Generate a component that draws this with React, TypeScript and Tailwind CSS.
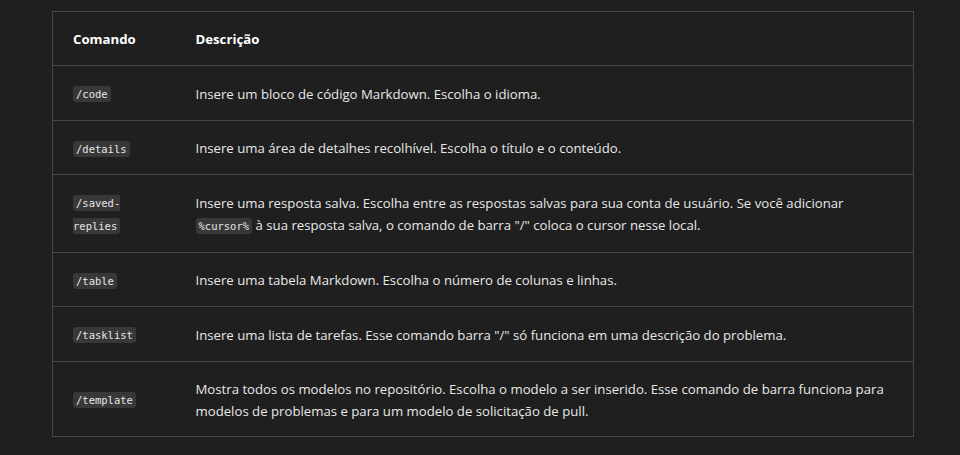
import React from "react";

const Code = ({ children }: { children: React.ReactNode }) => (
  <code className="rounded-[3px] bg-[#383838] px-[3px] py-[2px] font-['DejaVu_Sans_Mono',monospace] text-[10.5px] text-[#e6e6e6]">
    {children}
  </code>
);

const rows: { cmd: React.ReactNode; desc: React.ReactNode }[] = [
  { cmd: <Code>/code</Code>, desc: "Insere um bloco de código Markdown. Escolha o idioma." },
  { cmd: <Code>/details</Code>, desc: "Insere uma área de detalhes recolhível. Escolha o título e o conteúdo." },
  {
    cmd: <Code>/saved-replies</Code>,
    desc: (
      <>
        Insere uma resposta salva. Escolha entre as respostas salvas para sua conta de usuário. Se você adicionar{" "}
        <Code>%cursor%</Code> à sua resposta salva, o comando de barra "/" coloca o cursor nesse local.
      </>
    ),
  },
  { cmd: <Code>/table</Code>, desc: "Insere uma tabela Markdown. Escolha o número de colunas e linhas." },
  {
    cmd: <Code>/tasklist</Code>,
    desc: 'Insere uma lista de tarefas. Esse comando barra "/" só funciona em uma descrição do problema.',
  },
  {
    cmd: <Code>/template</Code>,
    desc: "Mostra todos os modelos no repositório. Escolha o modelo a ser inserido. Esse comando de barra funciona para modelos de problemas e para um modelo de solicitação de pull.",
  },
];

export default function App() {
  return (
    <div className="min-h-[455px] bg-[#1f1f1f] pl-[52px] pr-[46px] pt-[11px] font-['Open_Sans',sans-serif] text-[13.2px] text-[#e8e8e8]">
      <table className="w-full table-fixed border-collapse border border-[#474747]">
        <colgroup>
          <col className="w-[123px]" />
          <col />
        </colgroup>
        <thead>
          <tr className="border-b border-[#474747]">
            <th className="pl-5 pr-1 pt-4 pb-[15px] text-left leading-[22px] font-bold text-white">Comando</th>
            <th className="px-5 pt-4 pb-[15px] text-left leading-[22px] font-bold text-white">Descrição</th>
          </tr>
        </thead>
        <tbody>
          {rows.map((r, i) => (
            <tr key={i} className="border-b border-[#474747]">
              <td className="pl-5 pr-1 pt-4 pb-[14.5px] align-middle leading-[22px]">
                <div className="w-[72px]">{r.cmd}</div>
              </td>
              <td className="px-5 pt-4 pb-[14.5px] align-middle leading-[22px]">{r.desc}</td>
            </tr>
          ))}
        </tbody>
      </table>
    </div>
  );
}
